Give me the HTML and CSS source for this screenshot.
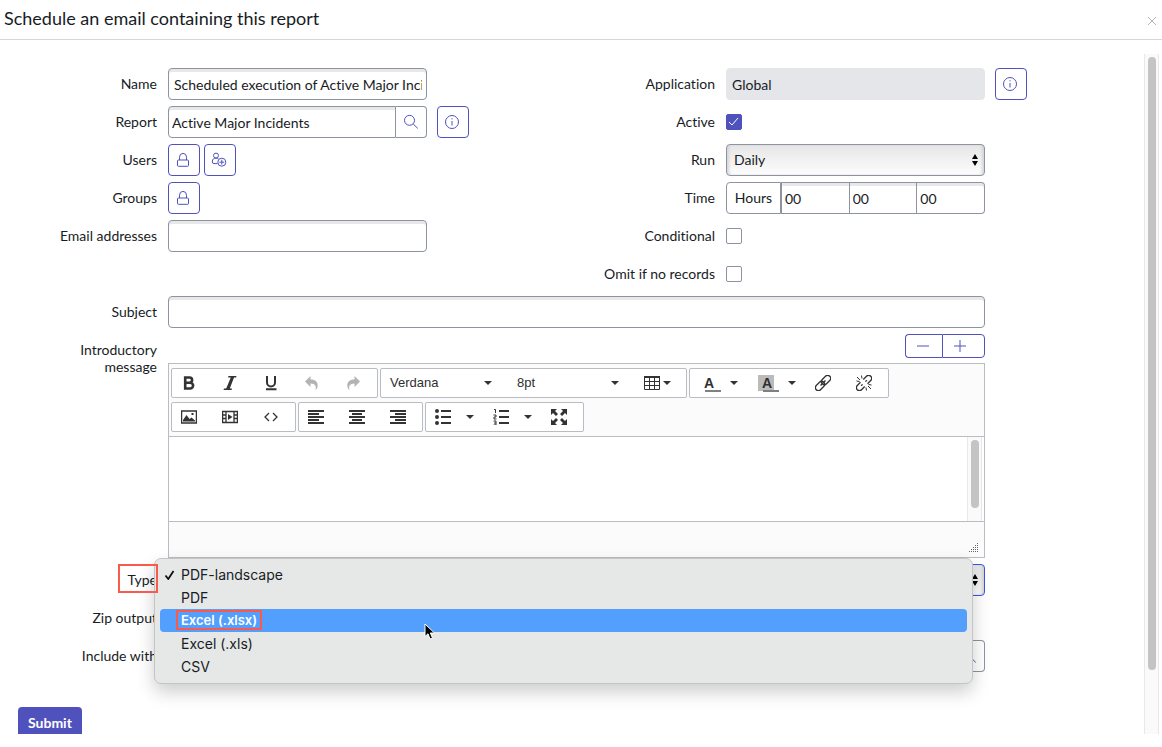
FILE: index.html
```html
<!DOCTYPE html>
<html lang="en">
<head>
    <meta charset="UTF-8">
    <meta name="viewport" content="width=device-width, initial-scale=1.0">
    <title>Schedule an email containing this report</title>
    <link rel="stylesheet" href="styles.css">
</head>
<body>
    <svg class="sprite" aria-hidden="true">
        <symbol id="info" viewBox="0 0 16 16"><circle cx="8" cy="8" r="6.5"/><path d="M8 7v4.5M8 4.2v1.2"/></symbol>
        <symbol id="search" viewBox="0 0 16 16"><circle cx="6.5" cy="6.3" r="5"/><path d="M10.2 10l4.6 4.4"/></symbol>
        <symbol id="lock" viewBox="0 0 16 16"><rect x="2.5" y="8" width="11" height="6.3" rx="1"/><path d="M4.5 8V5.2a3.5 3.8 0 0 1 7 0V8"/></symbol>
        <symbol id="caret" viewBox="0 0 8 4"><path d="M0 0h8L4 4z"/></symbol>
    </svg>

    <header class="header">
        <h1>Schedule an email containing this report</h1>
        <button type="button" class="close" aria-label="Close">
            <svg viewBox="0 0 10 10"><path d="M1 1l8 8M9 1l-8 8"/></svg>
        </button>
    </header>

    <main class="content">
        <form id="scheduleForm">
            <div class="columns">
                <div class="column">
                    <div class="field">
                        <label for="name">Name</label>
                        <input type="text" class="text-input" id="name" name="name" value="Scheduled execution of Active Major Incidents">
                    </div>
                    <div class="field">
                        <label for="report">Report</label>
                        <div class="input-group">
                            <input type="text" class="text-input tight" id="report" name="report" value="Active Major Incidents">
                            <button type="button" class="lookup" aria-label="Look up report"><svg class="icon"><use href="#search"/></svg></button>
                        </div>
                        <button type="button" class="icon-button" aria-label="Report info"><svg class="icon"><use href="#info"/></svg></button>
                    </div>
                    <div class="field">
                        <span class="label">Users</span>
                        <div class="buttons">
                            <button type="button" class="icon-button" aria-label="Unlock users"><svg class="icon"><use href="#lock"/></svg></button>
                            <button type="button" class="icon-button" aria-label="Add me">
                                <svg class="icon" viewBox="0 0 16 16"><circle cx="5" cy="3.6" r="2.5"/><path d="M6.6 11.6H3a1.6 1.6 0 0 1-1.6-1.6V9c0-1.6 1.4-2.9 3.6-2.9 1 0 1.8.3 2.4.7"/><circle cx="10.8" cy="10.2" r="4"/><path d="M10.8 7.8v4.8M8.4 10.2h4.8"/></svg>
                            </button>
                        </div>
                    </div>
                    <div class="field">
                        <span class="label">Groups</span>
                        <div class="buttons">
                            <button type="button" class="icon-button" aria-label="Unlock groups"><svg class="icon"><use href="#lock"/></svg></button>
                        </div>
                    </div>
                    <div class="field">
                        <label for="emails">Email addresses</label>
                        <input type="text" class="text-input" id="emails" name="emails">
                    </div>
                </div>

                <div class="column">
                    <div class="field">
                        <label for="application">Application</label>
                        <input type="text" class="text-input readonly" id="application" value="Global" readonly>
                        <button type="button" class="icon-button" aria-label="Application info"><svg class="icon"><use href="#info"/></svg></button>
                    </div>
                    <div class="field">
                        <label for="active">Active</label>
                        <div class="check">
                            <input type="checkbox" id="active" name="active" checked>
                            <svg viewBox="0 0 16 16"><path d="M3 8l3 3 6-7"/></svg>
                        </div>
                    </div>
                    <div class="field">
                        <label for="run">Run</label>
                        <div class="select">
                            <select id="run" name="run"><option>Daily</option></select>
                            <svg viewBox="0 0 6 12"><path d="M0 5l3-5 3 5zM0 7l3 5 3-5z"/></svg>
                        </div>
                    </div>
                    <div class="field">
                        <label for="hours">Time</label>
                        <div class="input-group time">
                            <span class="addon">Hours</span>
                            <input type="text" class="text-input tight" id="hours" value="00">
                            <input type="text" class="text-input tight" aria-label="Minutes" value="00">
                            <input type="text" class="text-input tight" aria-label="Seconds" value="00">
                        </div>
                    </div>
                    <div class="field">
                        <label for="conditional">Conditional</label>
                        <div class="check"><input type="checkbox" id="conditional" name="conditional"></div>
                    </div>
                    <div class="field">
                        <label for="omit">Omit if no records</label>
                        <div class="check"><input type="checkbox" id="omit" name="omit"></div>
                    </div>
                </div>
            </div>

            <div class="field">
                <label for="subject">Subject</label>
                <input type="text" class="text-input" id="subject" name="subject">
            </div>

            <div class="field message">
                <label for="message">Introductory message</label>
                <div>
                    <div class="resize">
                        <button type="button" aria-label="Shrink editor"><svg class="icon" viewBox="0 0 16 16"><path d="M2 8h12"/></svg></button>
                        <button type="button" class="grow" aria-label="Grow editor"><svg class="icon" viewBox="0 0 16 16"><path d="M2 8h12M8 2v12"/></svg></button>
                    </div>
                    <div class="editor">
                        <div class="toolbar">
                            <div class="group">
                                <button type="button" aria-label="Bold"><svg viewBox="0 0 16 16"><path class="line heavy" d="M4.2 2.5h4.3a2.6 2.6 0 0 1 0 5.2H4.2zM4.2 7.7h5a2.9 2.9 0 0 1 0 5.8h-5z"/></svg></button>
                                <button type="button" aria-label="Italic"><svg viewBox="0 0 16 16"><path d="M6.500 1h8l-.4 1.500h-2.100L7.800 13.500H10L9.500 15h-8l.5-1.500h2.200L8.800 2.500H6z"/></svg></button>
                                <button type="button" aria-label="Underline"><svg viewBox="0 0 16 16"><path class="line thick" d="M4 1v6.500a4 4 0 0 0 8 0V1M3 14.200h10.500"/></svg></button>
                                <button type="button" class="off" aria-label="Undo"><svg viewBox="0 0 16 16"><path d="M6.500 1v3.500c5 0 8 2.500 7 7.500-.3 1.200-1 2.300-2 3 1-3.500 0-6.500-5-6.500V12L1 6.500z"/></svg></button>
                                <button type="button" class="off" aria-label="Redo"><svg viewBox="0 0 16 16"><path d="M9.500 1v3.500c-5 0-8 2.500-7 7.500.3 1.200 1 2.300 2 3-1-3.500 0-6.500 5-6.500V12L15 6.500z"/></svg></button>
                            </div>
                            <div class="group">
                                <button type="button" class="font">Verdana<svg class="caret"><use href="#caret"/></svg></button>
                                <button type="button" class="font">8pt<svg class="caret"><use href="#caret"/></svg></button>
                                <button type="button" class="table" aria-label="Table"><svg viewBox="0 0 16 16"><path class="line thin" d="M.5 1.500h15v13H.5zM.5 6.500h15M.5 10.500h15M5.500 2v12.500M10.500 2v12.500"/><path d="M0 1h16v2H0z"/></svg><svg class="caret"><use href="#caret"/></svg></button>
                            </div>
                            <div class="group">
                                <button type="button" class="split" aria-label="Text color"><span class="color">A</span><svg class="caret"><use href="#caret"/></svg></button>
                                <button type="button" class="split" aria-label="Background color"><span class="color back">A</span><svg class="caret"><use href="#caret"/></svg></button>
                                <button type="button" aria-label="Insert link"><svg viewBox="0 0 16 16"><g class="line" transform="rotate(-45 8 8)"><rect x="-1.500" y="5" width="10.500" height="6" rx="3"/><rect x="7" y="5" width="10.500" height="6" rx="3"/><path d="M4.500 8h7"/></g></svg></button>
                                <button type="button" aria-label="Remove link"><svg viewBox="0 0 16 16"><g class="line" transform="rotate(-45 8 8)"><path d="M6 5H1.500a3 3 0 0 0 0 6H6M10 5h4.500a3 3 0 0 1 0 6H10M4 8h2M10 8h2"/></g><path class="line thin" d="M1 2l3 3M5.500.5L6 3.500M.5 6l3 .5M15 14l-3-3M10.500 15.500l-.5-3M15.500 10l-3-.5"/></svg></button>
                            </div>
                            <div class="group">
                                <button type="button" aria-label="Image"><svg viewBox="0 0 16 16"><path class="line" d="M.6 2h14.800v12H.6z"/><path d="M2 12.500V11l3.500-5 3 4 2-1.500 3.500 3v1zM10.500 4h2v2h-2z"/></svg></button>
                                <button type="button" aria-label="Media"><svg viewBox="0 0 16 16"><path class="line" d="M.6 2.500h14.800v11H.6zM4 2.500v11M12 2.500v11M.6 6H4M.6 9.500H4M12 6h3.400M12 9.500h3.400"/><path d="M6 5l4.500 3L6 11z"/></svg></button>
                                <button type="button" aria-label="Source code"><svg viewBox="0 0 16 16"><path class="line" d="M6 4L2 8l4 4M10 4l4 4-4 4"/></svg></button>
                            </div>
                            <div class="group">
                                <button type="button" aria-label="Align left"><svg viewBox="0 0 16 16"><path d="M0 1h16v2H0zM0 4h11v2H0zM0 7h16v2H0zM0 10h11v2H0zM0 13h16v2H0z"/></svg></button>
                                <button type="button" aria-label="Align center"><svg viewBox="0 0 16 16"><path d="M0 1h16v2H0zM3 4h10v2H3zM0 7h16v2H0zM3 10h10v2H3zM0 13h16v2H0z"/></svg></button>
                                <button type="button" aria-label="Align right"><svg viewBox="0 0 16 16"><path d="M0 1h16v2H0zM5 4h11v2H5zM0 7h16v2H0zM5 10h11v2H5zM0 13h16v2H0z"/></svg></button>
                            </div>
                            <div class="group">
                                <button type="button" class="split" aria-label="Bulleted list"><svg viewBox="0 0 16 16"><path d="M6 1h10v2H6zM6 7h10v2H6zM6 13h10v2H6z"/><circle cx="2" cy="2" r="2"/><circle cx="2" cy="8" r="2"/><circle cx="2" cy="14" r="2"/></svg><svg class="caret"><use href="#caret"/></svg></button>
                                <button type="button" class="split" aria-label="Numbered list"><svg viewBox="0 0 16 16"><path d="M6 1h10v2H6zM6 7h10v2H6zM6 13h10v2H6z"/><path class="line thin" d="M1 .5h1.500V4M.5 6H3v2H1v2h2.500M.5 12H3v4H.5M1 14h2"/></svg><svg class="caret"><use href="#caret"/></svg></button>
                                <button type="button" aria-label="Fullscreen"><svg viewBox="0 0 16 16"><path d="M0 0h6L4 2l3 3-2 2-3-3-2 2zM16 0h-6l2 2-3 3 2 2 3-3 2 2zM0 16h6l-2-2 3-3-2-2-3 3-2-2zM16 16h-6l2-2-3-3 2-2 3 3 2-2z"/></svg></button>
                            </div>
                        </div>
                        <div class="editing">
                            <textarea id="message" name="message"></textarea>
                            <div class="scrollbar"><div class="thumb"></div></div>
                        </div>
                        <div class="statusbar">
                            <svg viewBox="0 0 10 10"><path d="M8 .5h2M6 2.500h4M4 4.500h6M2 6.500h8M0 8.500h10"/></svg>
                        </div>
                    </div>
                </div>
            </div>

            <div class="field">
                <label for="type">Type<span class="marker"></span></label>
                <div class="select focused">
                    <select id="type" name="type">
                        <option>PDF-landscape</option>
                        <option>PDF</option>
                        <option>Excel (.xlsx)</option>
                        <option>Excel (.xls)</option>
                        <option>CSV</option>
                    </select>
                    <svg viewBox="0 0 6 12"><path d="M0 5l3-5 3 5zM0 7l3 5 3-5z"/></svg>
                    <ul class="menu" role="listbox" aria-label="Type">
                        <li role="option" aria-selected="true"><svg class="tick" viewBox="0 0 10 10"><path d="M1 5.500l2.800 3.500L9 1"/></svg>PDF-landscape</li>
                        <li role="option">PDF</li>
                        <li role="option" class="highlighted"><span class="marked">Excel (.xlsx)</span></li>
                        <li role="option">Excel (.xls)</li>
                        <li role="option">CSV</li>
                    </ul>
                    <svg class="cursor" viewBox="0 0 12 18"><path d="M1 1v12.500l3-2.700 2 5.200 2.500-1-2.200-5H10.500z"/></svg>
                </div>
            </div>
            <div class="field">
                <label for="zip">Zip output</label>
                <div class="check"><input type="checkbox" id="zip" name="zip"></div>
            </div>
            <div class="field">
                <label for="include">Include with</label>
                <div class="input-group">
                    <input type="text" class="text-input tight" id="include" name="include">
                    <button type="button" class="lookup" aria-label="Look up include with"><svg class="icon"><use href="#search"/></svg></button>
                </div>
            </div>

            <button type="submit" class="submit">Submit</button>
        </form>
        <div class="scrollbar page"><div class="thumb"></div></div>
    </main>
</body>
</html>
```
FILE: styles.css
```css
* {
    box-sizing: border-box;
}
body {
    margin: 0;
    height: 100vh;
    display: flex;
    flex-direction: column;
    overflow: hidden;
    background-color: white;
    color: #181c25;
    font-family: Lato, sans-serif;
    font-size: 14px;
    font-variant-ligatures: none;
}
button, input, select, textarea {
    margin: 0;
    font: inherit;
    font-variant-ligatures: none;
    color: inherit;
}
button {
    padding: 0;
    border: none;
    background: none;
    cursor: pointer;
}
svg {
    display: block;
    flex: none;
}
.sprite {
    position: absolute;
    width: 0;
    height: 0;
}
.icon {
    width: 16px;
    height: 16px;
    fill: none;
    stroke: #4f52bd;
    stroke-width: 1;
}

/* header */
.header {
    display: flex;
    justify-content: space-between;
    align-items: center;
    height: 40px;
    padding: 0 5px 4px 4px;
    border-bottom: 1px solid #d5d7da;
}
.header h1 {
    margin: 0;
    font-size: 18px;
    font-weight: normal;
}
.close svg {
    width: 10px;
    height: 10px;
    margin-top: 6px;
    stroke: #b4b6ba;
}

/* form */
.content {
    flex: 1;
    min-height: 0;
    display: flex;
    margin: 14px 3px 13px 0;
}
form {
    flex: 1;
    display: flex;
    flex-direction: column;
    gap: 6px;
    padding: 14px 117px 0 0;
    overflow: hidden;
}
.columns {
    flex: none;
    display: grid;
    grid-template-columns: 1fr 1fr;
    gap: 89px;
}
.column {
    display: flex;
    flex-direction: column;
    gap: 6px;
}
.field {
    flex: none;
    display: grid;
    grid-template-columns: 158px 1fr 32px;
    column-gap: 10px;
    min-height: 32px;
    align-items: center;
}
.field > label, .field > .label {
    position: relative;
    padding: 0 1px 2px 0;
    text-align: right;
    line-height: 17px;
}
.field > :nth-child(2) {
    min-width: 0;
}
.text-input {
    width: 100%;
    height: 32px;
    padding: 1px 4px 0 5px;
    border: 1px solid #8d93a0;
    border-radius: 4px;
    background-color: white;
    box-shadow: inset 0 3px 0 #e8e8e8;
}
.text-input.tight {
    padding-left: 3px;
}
.text-input.readonly {
    border-color: #e5e6e9;
    background-color: #e5e6e9;
    box-shadow: none;
}
.input-group {
    display: flex;
}
.input-group .text-input {
    flex: 1;
    min-width: 0;
    border-radius: 4px 0 0 4px;
}
.lookup {
    display: flex;
    align-items: center;
    justify-content: center;
    width: 31px;
    height: 32px;
    padding-right: 1px;
    border: 1px solid #8d93a0;
    border-left: none;
    border-radius: 0 4px 4px 0;
}
.buttons {
    display: flex;
    gap: 4px;
}
.icon-button {
    display: flex;
    align-items: center;
    justify-content: center;
    width: 32px;
    height: 32px;
    padding-right: 2px;
    border: 1px solid #4f52bd;
    border-radius: 4px;
}
.time .addon {
    width: 55px;
    height: 32px;
    border: 1px solid #8d93a0;
    border-radius: 4px 0 0 4px;
    line-height: 30px;
    text-align: center;
}
.time .text-input {
    border-radius: 0;
}
.time .text-input + .text-input {
    border-left: none;
}
.time .text-input:last-child {
    border-radius: 0 4px 4px 0;
}
.check {
    position: relative;
    height: 16px;
}
.check input {
    display: block;
    appearance: none;
    width: 16px;
    height: 16px;
    border: 1px solid #8d93a0;
    border-radius: 2px;
}
.check input:checked {
    border-color: #4f52bd;
    background-color: #4f52bd;
}
.check svg {
    position: absolute;
    top: 0;
    left: 0;
    width: 16px;
    height: 16px;
    fill: none;
    stroke: white;
    pointer-events: none;
}
.select {
    position: relative;
}
.select select {
    display: block;
    appearance: none;
    width: 100%;
    height: 32px;
    padding: 0 7px 2px;
    border: 1px solid #8d93a0;
    border-radius: 4px;
    background: linear-gradient(#e6e6e6, #fdfdfd);
    box-shadow: inset 3px 0 3px -1px #d4d4d4, inset -3px 0 3px -1px #d4d4d4;
}
.select.focused select {
    border-color: #3b55e0;
}
.select > svg {
    position: absolute;
    top: 10px;
    right: 7px;
    width: 6px;
    height: 12px;
    pointer-events: none;
}

/* message editor */
.field.message {
    align-items: start;
}
.message > label {
    padding: 7px 1px 0 70px;
}
.resize {
    display: flex;
    justify-content: flex-end;
    margin-bottom: 5px;
}
.resize button {
    width: 37px;
    height: 24px;
    padding-left: 9px;
    border: 1px solid #4f52bd;
    border-right: none;
    border-radius: 4px 0 0 4px;
}
.resize .grow {
    width: 43px;
    border-right: 1px solid #4f52bd;
    border-radius: 0 4px 4px 0;
}
.editor {
    border: 1px solid #b9bcc2;
    background-color: #fbfbfb;
    color: #2f2f2f;
}
.toolbar {
    display: flex;
    flex-wrap: wrap;
    gap: 4px 2px;
    padding: 4px 2px;
    border-bottom: 1px solid #b9bcc2;
}
.group {
    display: flex;
    border: 1px solid #b9bcc2;
    border-radius: 2px;
    background-color: white;
}
.group button {
    display: flex;
    align-items: center;
    width: 41px;
    height: 28px;
    padding-left: 9px;
}
.group svg {
    width: 16px;
    height: 16px;
    fill: #333333;
}
.group .line {
    fill: none;
    stroke: #333333;
    stroke-width: 1.3;
}
.group .heavy {
    stroke-width: 2.6;
}
.group .thick {
    stroke-width: 2;
}
.group .thin {
    stroke-width: 1;
}
.group .off svg {
    fill: #b3b3b3;
}
.group .caret {
    width: 8px;
    height: 4px;
    margin-left: auto;
}
.group button.font {
    width: 127px;
    padding-right: 16px;
    padding-bottom: 1px;
    font-family: "Liberation Sans", Arial, sans-serif;
    font-size: 13px;
}
.group button.table {
    width: 51px;
    padding-right: 15px;
}
.group button.split {
    width: 58px;
    padding-right: 10px;
}
.color {
    position: relative;
    width: 22px;
    height: 16px;
    padding-left: 5px;
    font-family: "Liberation Sans", Arial, sans-serif;
    font-weight: bold;
    line-height: 16px;
    text-align: left;
}
.color::after {
    content: "";
    position: absolute;
    left: 6px;
    bottom: -1px;
    width: 16px;
    height: 2px;
    background-color: #808080;
}
.color.back {
    background: linear-gradient(#bbbbbb, #bbbbbb) 1px 0 / 16px 16px no-repeat;
}
.editing {
    display: flex;
    height: 84px;
    background-color: white;
}
.editing textarea {
    flex: 1;
    border: none;
    outline: none;
    resize: none;
    background: none;
}
.scrollbar {
    width: 15px;
    padding: 3px;
    border: solid #e8e8e8;
    border-width: 0 1px;
    background-color: #fafafa;
}
.editing .scrollbar {
    margin-right: 2px;
}
.thumb {
    width: 8px;
    height: 68px;
    border-radius: 4px;
    background-color: #c4c4c4;
}
.page .thumb {
    height: 91%;
}
.statusbar {
    display: flex;
    justify-content: flex-end;
    align-items: flex-end;
    height: 36px;
    padding: 0 5px 4px;
    border-top: 1px solid #b9bcc2;
}
.statusbar svg {
    width: 10px;
    height: 10px;
    stroke: #666666;
    stroke-dasharray: 1 1;
}

/* open type list */
.menu {
    position: absolute;
    top: -6px;
    left: -14px;
    right: 12px;
    z-index: 2;
    margin: 0;
    padding: 4px 5px 5px;
    border: 1px solid #c3c5c4;
    border-radius: 7px;
    background-color: #e5e8e6;
    box-shadow: 0 8px 18px rgba(0, 0, 0, 0.2);
    list-style: none;
    font-family: Inter, sans-serif;
}
.menu li {
    position: relative;
    height: 23px;
    padding-left: 21px;
    border-radius: 4px;
    line-height: 23px;
}
.menu .highlighted {
    background-color: #529ffe;
    color: white;
    font-size: 13px;
    font-weight: 600;
}
.tick {
    position: absolute;
    top: 7px;
    left: 4px;
    width: 11px;
    height: 10px;
    fill: none;
    stroke: #111111;
    stroke-width: 1.8;
}
.marked {
    position: relative;
}
.marked::after {
    content: "";
    position: absolute;
    inset: -2px -5px;
    border: 2px solid #fa5a4b;
}
.marker {
    position: absolute;
    top: -7px;
    right: 0;
    z-index: 3;
    width: 40px;
    height: 29px;
    border: 2px solid #fa5a4b;
}
.select > .cursor {
    top: 59px;
    left: 256px;
    z-index: 3;
    width: 12px;
    height: 18px;
    stroke: white;
}
.submit {
    align-self: flex-start;
    flex: none;
    height: 32px;
    margin: 29px 0 0 18px;
    padding: 0 10px 2px;
    border-radius: 4px;
    background-color: #4f52bd;
    color: white;
    font-weight: bold;
}
```
